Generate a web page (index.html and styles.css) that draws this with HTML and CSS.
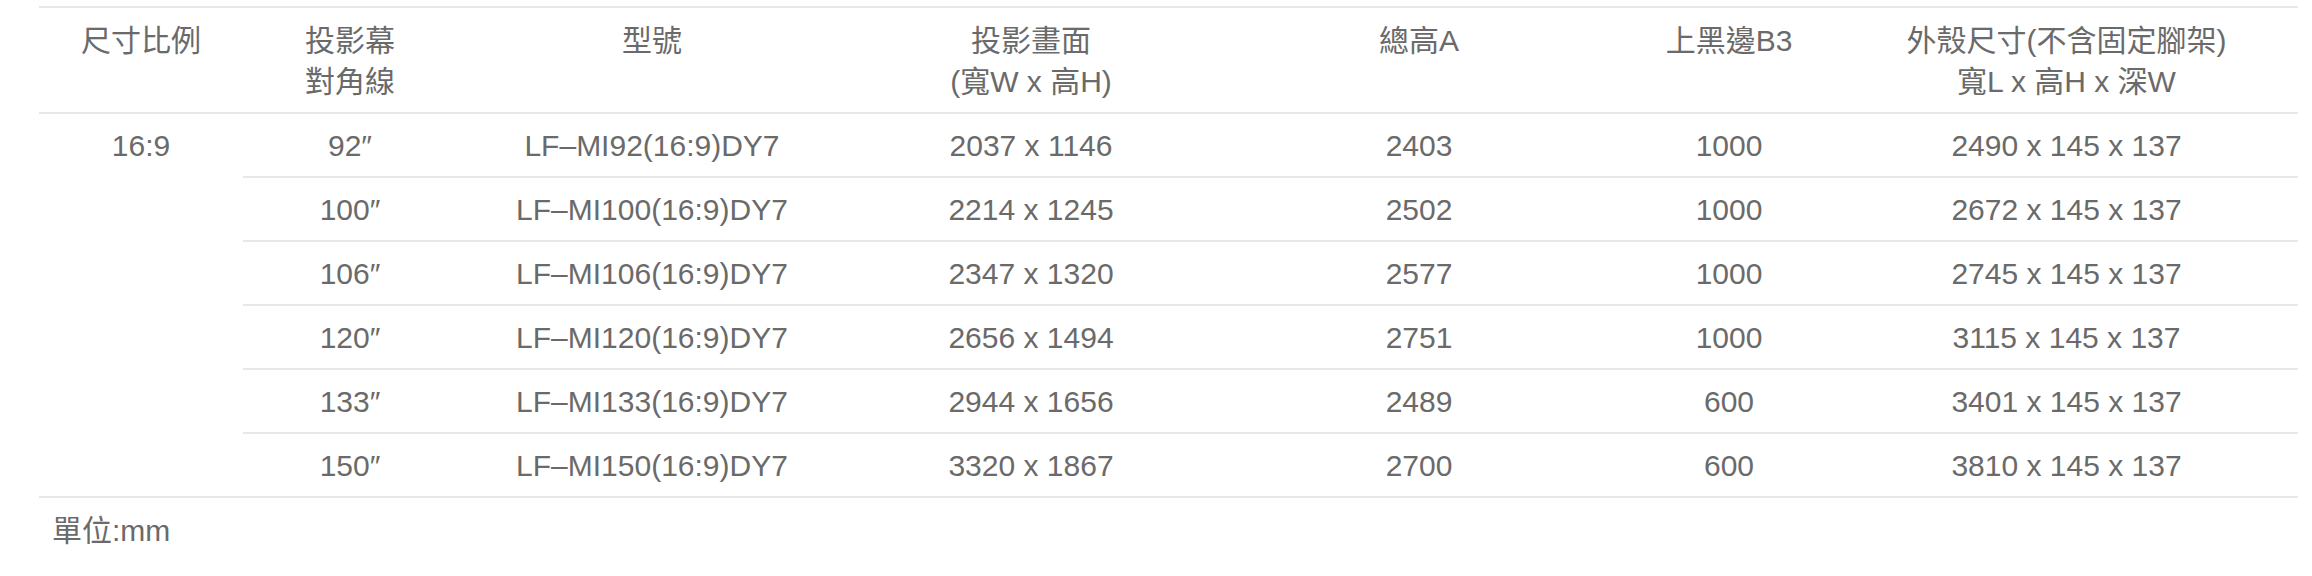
FILE: index.html
```html
<!DOCTYPE html>
<html lang="zh-Hant">
<head>
<meta charset="utf-8">
<title>規格表</title>
<link rel="stylesheet" href="styles.css">
</head>
<body>
<div class="wrap">
  <table class="spec">
    <colgroup>
      <col class="c1"><col class="c2"><col class="c3"><col class="c4"><col class="c5"><col class="c6"><col class="c7">
    </colgroup>
    <thead>
      <tr>
        <th>尺寸比例</th>
        <th>投影幕<br>對角線</th>
        <th>型號</th>
        <th>投影畫面<br>(寬W x 高H)</th>
        <th>總高A</th>
        <th>上黑邊B3</th>
        <th>外殼尺寸(不含固定腳架)<br>寬L x 高H x 深W</th>
      </tr>
    </thead>
    <tbody>
      <tr>
        <td class="ratio" rowspan="6">16:9</td>
        <td>92″</td><td>LF–MI92(16:9)DY7</td><td>2037 x 1146</td><td>2403</td><td>1000</td><td>2490 x 145 x 137</td>
      </tr>
      <tr>
        <td>100″</td><td>LF–MI100(16:9)DY7</td><td>2214 x 1245</td><td>2502</td><td>1000</td><td>2672 x 145 x 137</td>
      </tr>
      <tr>
        <td>106″</td><td>LF–MI106(16:9)DY7</td><td>2347 x 1320</td><td>2577</td><td>1000</td><td>2745 x 145 x 137</td>
      </tr>
      <tr>
        <td>120″</td><td>LF–MI120(16:9)DY7</td><td>2656 x 1494</td><td>2751</td><td>1000</td><td>3115 x 145 x 137</td>
      </tr>
      <tr>
        <td>133″</td><td>LF–MI133(16:9)DY7</td><td>2944 x 1656</td><td>2489</td><td>600</td><td>3401 x 145 x 137</td>
      </tr>
      <tr>
        <td>150″</td><td>LF–MI150(16:9)DY7</td><td>3320 x 1867</td><td>2700</td><td>600</td><td>3810 x 145 x 137</td>
      </tr>
    </tbody>
  </table>
  <p class="unit">單位:mm</p>
</div>
</body>
</html>
```
FILE: styles.css
```css
html, body {
  margin: 0;
  padding: 0;
  background: #fff;
}
body {
  font-family: "Liberation Sans", "Noto Sans CJK TC", sans-serif;
  font-size: 30px;
  color: #6a6a6a;
}
.wrap {
  padding: 6px 0 0 39px;
  width: 2259px;
}
.spec {
  width: 2259px;
  border-collapse: collapse;
  table-layout: fixed;
  border-top: 2px solid #e8e8e8;
}
.c1 { width: 204px; }
.c2 { width: 214px; }
.c3 { width: 390px; }
.c4 { width: 368px; }
.c5 { width: 408px; }
.c6 { width: 212px; }
.c7 { width: 463px; }
.spec th {
  font-weight: normal;
  line-height: 41px;
  padding: 12px 0 10px;
  vertical-align: top;
  text-align: center;
  border-bottom: 2px solid #e8e8e8;
}
.spec td {
  line-height: 41px;
  padding: 11px 0 10px;
  vertical-align: top;
  text-align: center;
  border-bottom: 2px solid #e8e8e8;
}
.unit {
  margin: 12px 0 0 13px;
  line-height: 41px;
}
```
